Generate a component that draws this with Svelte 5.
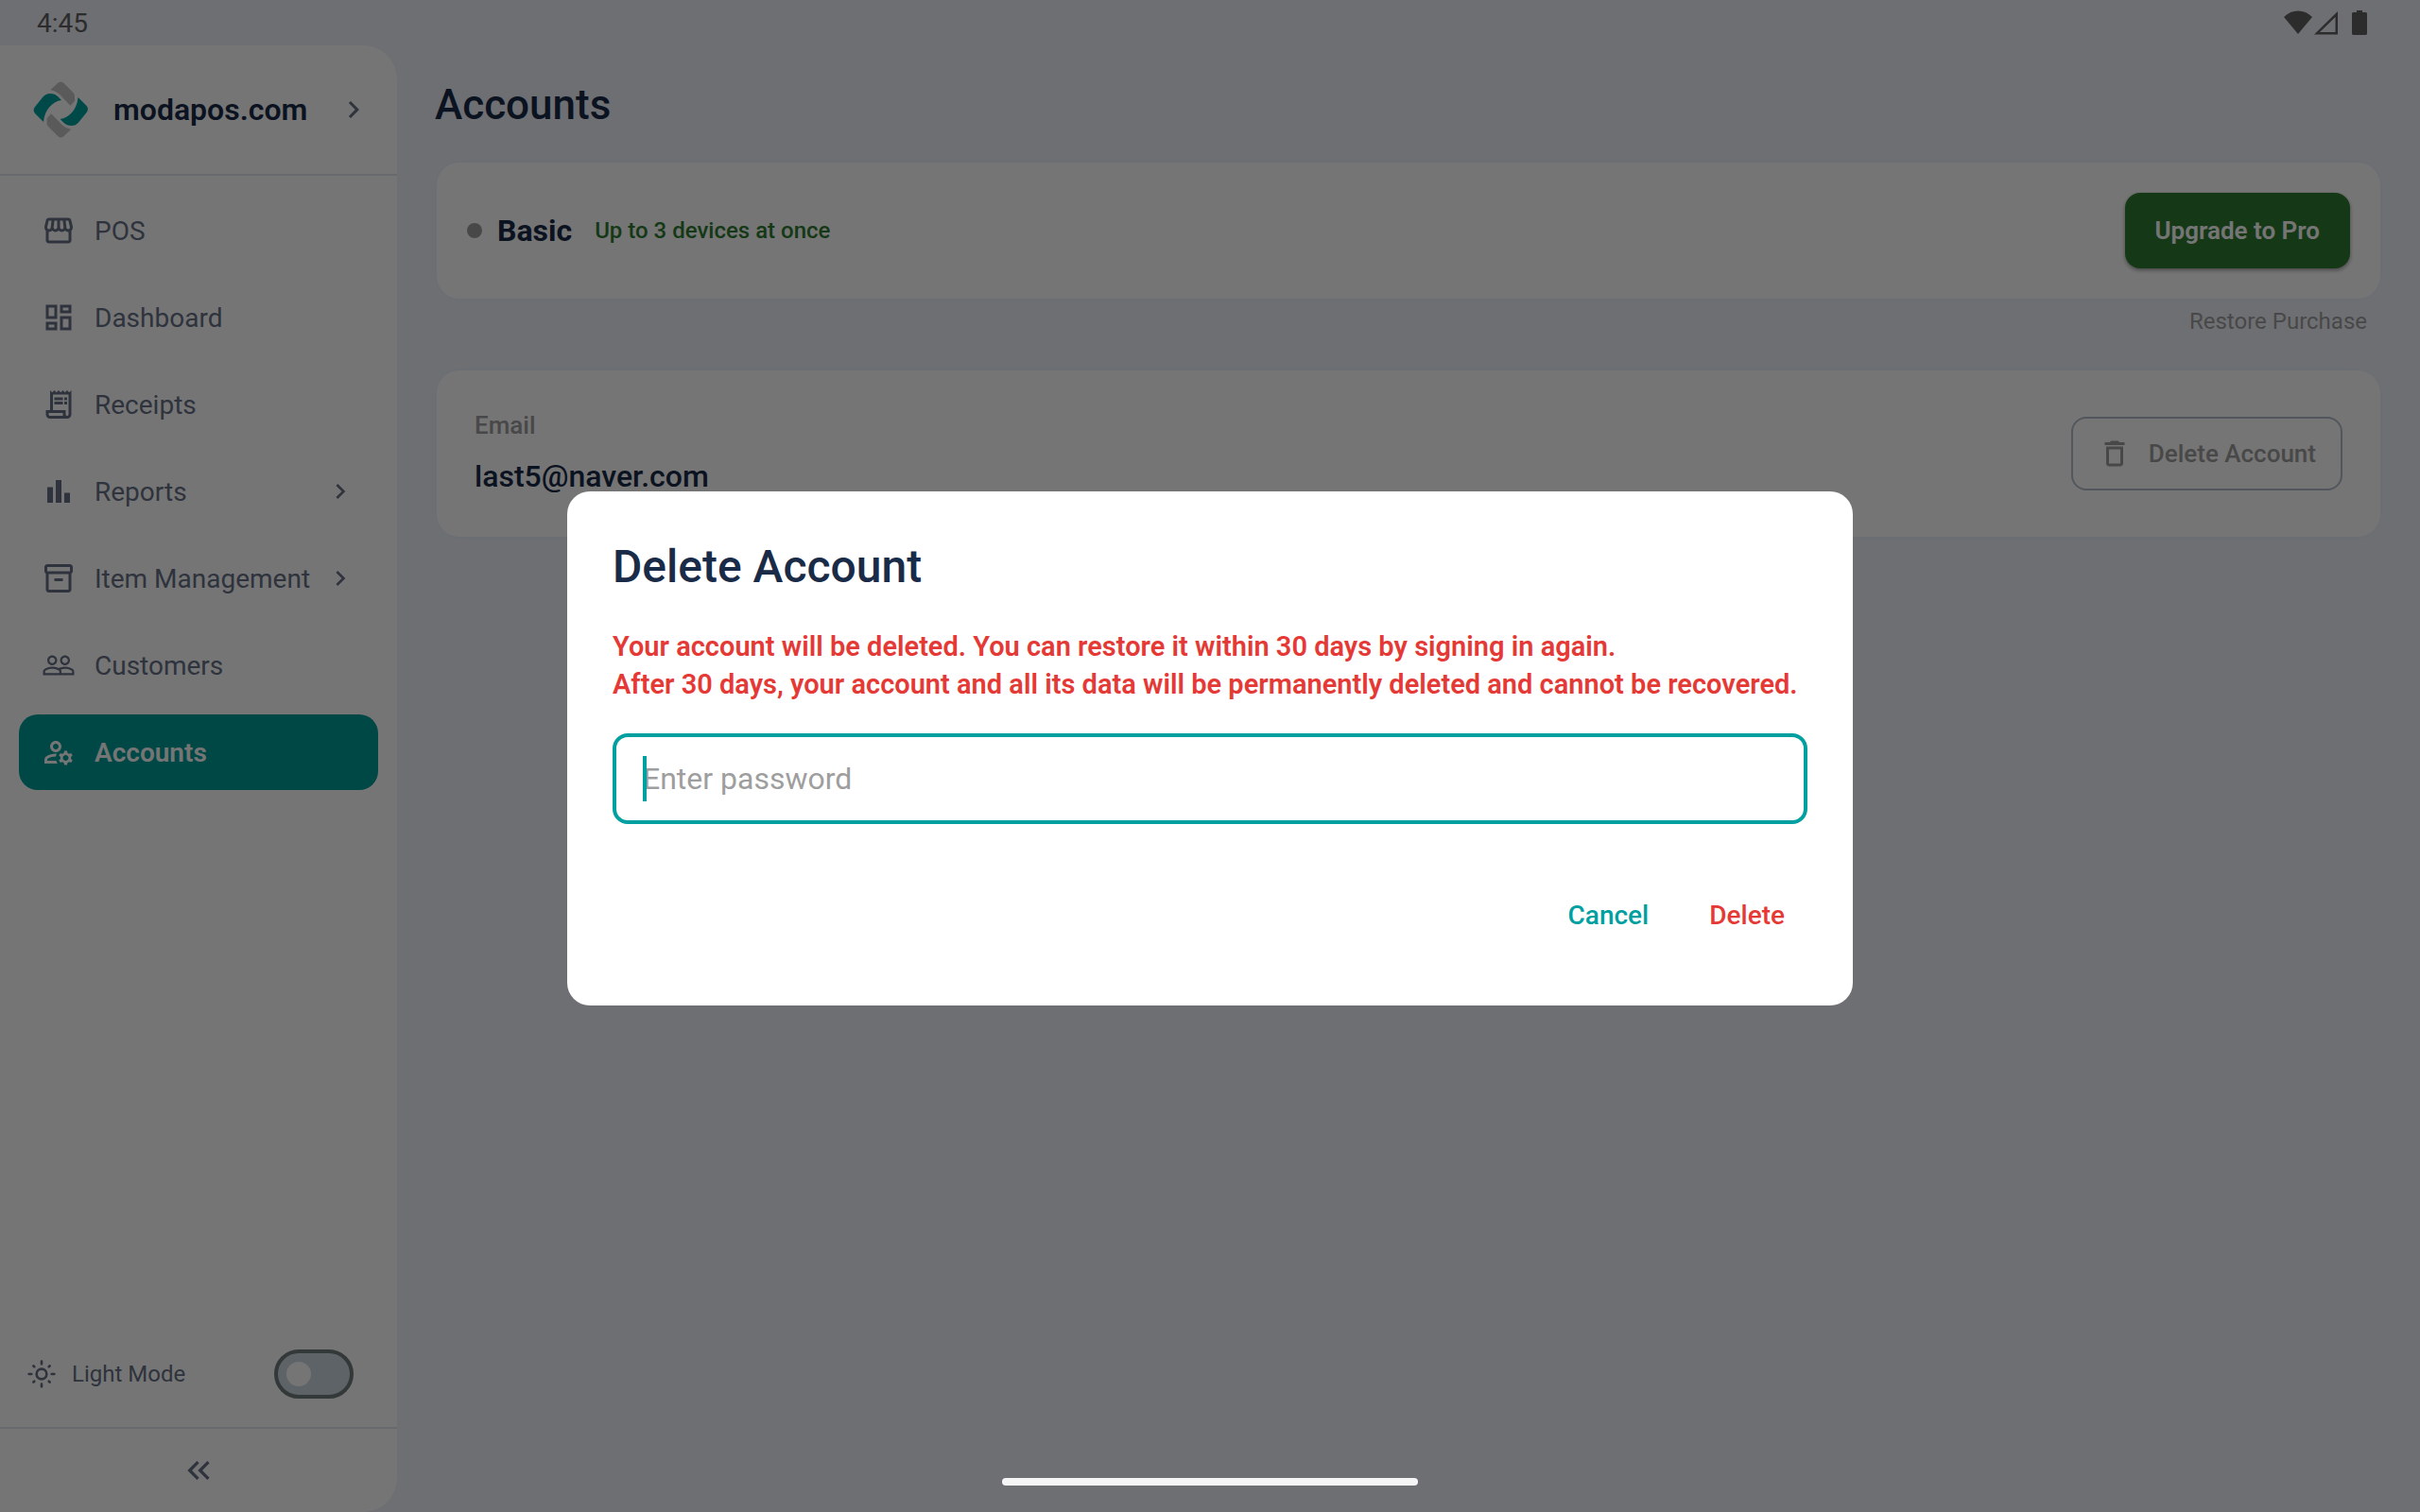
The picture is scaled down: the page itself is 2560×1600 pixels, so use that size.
<script lang="ts">
  type NavItem = { label: string; icon: string; expandable?: boolean; active?: boolean };

  const items: NavItem[] = [
    {
      label: 'POS',
      icon: 'M21.9 8.89l-1.05-4.37c-.22-.9-1-1.52-1.91-1.52H5.05c-.9 0-1.69.63-1.9 1.52L2.1 8.89c-.24 1.02-.02 2.06.62 2.88.08.11.19.19.28.29V19c0 1.1.9 2 2 2h14c1.1 0 2-.9 2-2v-6.94c.09-.09.2-.18.28-.28.64-.82.87-1.87.62-2.89zm-2.99-3.9l1.05 4.37c.1.42.01.84-.25 1.17-.14.18-.44.47-.94.47-.61 0-1.14-.49-1.21-1.14L16.98 5l1.93-.01zM13 5h1.96l.54 4.52c.05.39-.07.78-.33 1.07-.22.26-.54.41-.95.41-.67 0-1.22-.59-1.22-1.31V5zM8.49 9.52L9.04 5H11v4.69c0 .72-.55 1.31-1.29 1.31-.34 0-.65-.15-.89-.41-.25-.29-.37-.68-.33-1.07zm-4.45-.16L5.05 5h1.97l-.58 4.86c-.08.65-.6 1.14-1.21 1.14-.49 0-.8-.29-.93-.47-.27-.32-.36-.75-.26-1.17zM5 19v-6.03c.08.01.15.03.23.03.87 0 1.66-.36 2.24-.95.6.6 1.4.95 2.31.95.87 0 1.65-.36 2.23-.93.59.57 1.39.93 2.29.93.84 0 1.64-.35 2.24-.95.58.59 1.37.95 2.24.95.08 0 .15-.02.23-.03V19H5z'
    },
    {
      label: 'Dashboard',
      icon: 'M19 5v2h-4V5h4M9 5v6H5V5h4m10 8v6h-4v-6h4M9 17v2H5v-2h4M21 3h-8v6h8V3zM11 3H3v10h8V3zm10 8h-8v10h8V11zm-10 4H3v6h8v-6z'
    },
    {
      label: 'Receipts',
      icon: 'M19.5 3.5L18 2l-1.5 1.5L15 2l-1.5 1.5L12 2l-1.5 1.5L9 2 7.5 3.5 6 2v14H3v3c0 1.66 1.34 3 3 3h12c1.66 0 3-1.34 3-3V2l-1.5 1.5zM15 20H6c-.55 0-1-.45-1-1v-1h10v2zm4-1c0 .55-.45 1-1 1s-1-.45-1-1v-3H8V5h11v14zM9 7h6v2H9zM16 7h2v2h-2zM9 10h6v2H9zM16 10h2v2h-2z'
    },
    { label: 'Reports', icon: 'M4 9h4v11H4zM16 13h4v7h-4zM10 4h4v16h-4z', expandable: true },
    {
      label: 'Item Management',
      icon: 'M20 2H4c-1 0-2 .9-2 2v3.01c0 .72.43 1.34 1 1.69V20c0 1.1 1.1 2 2 2h14c.9 0 2-.9 2-2V8.7c.57-.35 1-.97 1-1.69V4c0-1.1-1-2-2-2zm-1 18H5V9h14v11zm1-13H4V4h16v3zM9 12h6v2H9z',
      expandable: true
    },
    {
      label: 'Customers',
      icon: 'M16.5 13c-1.2 0-3.07.34-4.5 1-1.43-.67-3.3-1-4.5-1C5.33 13 1 14.08 1 16.25V19h22v-2.75c0-2.17-4.33-3.25-6.5-3.25zm-4 4.5h-10v-1.25c0-.54 2.56-1.75 5-1.75s5 1.21 5 1.75v1.25zm9 0H14v-1.25c0-.46-.2-.86-.52-1.22.88-.3 1.96-.53 3.02-.53 2.44 0 5 1.21 5 1.75v1.25zM7.5 12c1.93 0 3.5-1.57 3.5-3.5S9.43 5 7.5 5 4 6.57 4 8.5 5.57 12 7.5 12zm0-5.5c1.1 0 2 .9 2 2s-.9 2-2 2-2-.9-2-2 .9-2 2-2zm9 5.5c1.93 0 3.5-1.57 3.5-3.5S18.43 5 16.5 5 13 6.57 13 8.5s1.57 3.5 3.5 3.5zm0-5.5c1.1 0 2 .9 2 2s-.9 2-2 2-2-.9-2-2 .9-2 2-2z'
    },
    {
      label: 'Accounts',
      icon: 'M4 18v-.65c0-.34.16-.66.41-.81C6.1 15.53 8.03 15 10 15c.03 0 .05 0 .08.01.1-.7.3-1.37.59-1.98-.22-.02-.44-.03-.67-.03-2.42 0-4.68.67-6.61 1.82-.88.52-1.39 1.5-1.39 2.53V20h9.26c-.42-.6-.75-1.28-.97-2H4zM10 12c2.21 0 4-1.79 4-4s-1.79-4-4-4-4 1.79-4 4 1.79 4 4 4zm0-6c1.1 0 2 .9 2 2s-.9 2-2 2-2-.9-2-2 .9-2 2-2zM20.75 16c0-.22-.03-.42-.06-.63l1.14-1.01-1-1.73-1.45.49c-.32-.27-.68-.48-1.08-.63L18 11h-2l-.3 1.49c-.4.15-.76.36-1.08.63l-1.45-.49-1 1.73 1.14 1.01c-.03.21-.06.41-.06.63s.03.42.06.63l-1.14 1.01 1 1.73 1.45-.49c.32.27.68.48 1.08.63L16 21h2l.3-1.49c.4-.15.76-.36 1.08-.63l1.45.49 1-1.73-1.14-1.01c.03-.21.06-.41.06-.63zM17 18c-1.1 0-2-.9-2-2s.9-2 2-2 2 .9 2 2-.9 2-2 2z',
      active: true
    }
  ];

  const chevron = 'M8.59 16.59 13.17 12 8.59 7.41 10 6l6 6-6 6z';

  let password = $state('');
  let lightMode = $state(false);
</script>

{#snippet logoHalf()}
  <path class="logo-gray" d="M21.300 11.300 29 4Q32.300 1 35.500 4L45.500 14Q47 15.500 47 17.500V22.700L42.500 27.700 33.500 18.500Q28 12 21.300 11.300z" />
  <path class="logo-teal" d="M33 22Q26 23 20.500 29Q15 35 14 45L5 36Q2.300 32.500 5 29L13.500 18.500Q16.500 15 21 15Q26 15 29 18z" />
{/snippet}

<div class="app">
  <header class="status-bar">
    <span>4:45</span>
    <div class="status-icons">
      <svg width="32" height="28" viewBox="0 0 32 28">
        <path d="M0 8C8.500-.6 21.500-.6 30 8L15 26z" />
      </svg>
      <svg width="26" height="28" viewBox="0 0 26 28">
        <path d="M0 26.500 25 2v24.500zM6 24h16.500V8z" fill-rule="evenodd" />
      </svg>
      <svg class="battery" width="16" height="28" viewBox="0 0 16 28">
        <path d="M5 1h6v2h3.500c.8 0 1.500.7 1.500 1.500v21c0 .8-.7 1.500-1.500 1.500h-13C.7 27 0 26.300 0 25.500v-21C0 3.700.7 3 1.500 3H5z" />
      </svg>
    </div>
  </header>

  <div class="layout">
    <aside class="sidebar">
      <button class="brand" type="button">
        <svg class="logo" viewBox="0 0 64 64">
          {@render logoHalf()}
          <g transform="rotate(180 32.300 32)">{@render logoHalf()}</g>
        </svg>
        <span>modapos.com</span>
        <svg class="icon" viewBox="0 0 24 24"><path d={chevron} /></svg>
      </button>

      <nav>
        {#each items as item (item.label)}
          <a class="nav-item" class:active={item.active} href="#{item.label.toLowerCase().replace(' ', '-')}">
            <svg class="icon" viewBox="0 0 24 24"><path d={item.icon} /></svg>
            <span>{item.label}</span>
            {#if item.expandable}
              <svg class="expand" viewBox="0 0 24 24"><path d={chevron} /></svg>
            {/if}
          </a>
        {/each}
      </nav>

      <label class="mode">
        <svg class="sun" viewBox="0 0 24 24">
          <circle cx="12" cy="12" r="4" />
          <path d="M12 2v2M12 20v2M2 12h2M20 12h2M5.500 5.500l.7.7M17.800 17.800l.7.7M5.500 18.500l.7-.7M17.800 6.200l.7-.7" />
        </svg>
        <span>Light Mode</span>
        <input type="checkbox" role="switch" bind:checked={lightMode} />
      </label>

      <button class="collapse" type="button" aria-label="Collapse menu">
        <svg viewBox="0 0 24 24">
          <path d="M17.590 18 19 16.590 14.420 12 19 7.410 17.590 6l-6 6zM11 18l1.410-1.410L7.830 12l4.580-4.590L11 6l-6 6z" />
        </svg>
      </button>
    </aside>

    <main>
      <h1>Accounts</h1>

      <section class="card plan">
        <span class="dot"></span>
        <strong>Basic</strong>
        <span class="limit">Up to 3 devices at once</span>
        <button class="upgrade" type="button">Upgrade to Pro</button>
      </section>
      <button class="restore" type="button">Restore Purchase</button>

      <section class="card account">
        <dl>
          <dt>Email</dt>
          <dd>last5@naver.com</dd>
        </dl>
        <button class="delete-account" type="button">
          <svg class="icon" viewBox="0 0 24 24">
            <path d="M6 19c0 1.100.9 2 2 2h8c1.100 0 2-.9 2-2V7H6v12zM8 9h8v10H8V9zm7.500-5-1-1h-5l-1 1H5v2h14V4z" />
          </svg>
          Delete Account
        </button>
      </section>
    </main>
  </div>
</div>

<div class="scrim">
  <div class="dialog" role="dialog" aria-modal="true" aria-labelledby="dialog-title">
    <h2 id="dialog-title">Delete Account</h2>
    <p>
      Your account will be deleted. You can restore it within 30 days by signing in again.<br />
      After 30 days, your account and all its data will be permanently deleted and cannot be recovered.
    </p>
    <div class="field">
      <input type="password" placeholder="Enter password" aria-label="Enter password" bind:value={password} />
      {#if !password}
        <span class="caret"></span>
      {/if}
    </div>
    <div class="actions">
      <button class="cancel" type="button">Cancel</button>
      <button class="confirm" type="button">Delete</button>
    </div>
  </div>
  <div class="home-bar"></div>
</div>

<style>
  :global(body) {
    margin: 0;
    font-family: Roboto, 'Liberation Sans', sans-serif;
    font-size: 28px;
    color: #1a2b48;
    background: #f0f2fa;
  }

  button {
    font: inherit;
    color: inherit;
    background: none;
    border: 0;
    padding: 0;
    cursor: pointer;
  }

  svg {
    display: block;
    flex: none;
    fill: currentColor;
  }

  .app {
    display: flex;
    flex-direction: column;
    min-height: 100vh;
  }

  .status-bar {
    display: flex;
    align-items: center;
    justify-content: space-between;
    height: 48px;
    padding: 0 56px 0 39px;
    color: #616161;
  }

  .status-icons {
    display: flex;
    align-items: center;
  }

  .battery {
    margin-left: 14px;
  }

  .layout {
    display: flex;
    flex: 1;
  }

  .sidebar {
    display: flex;
    flex: none;
    flex-direction: column;
    width: 420px;
    border-radius: 0 36px 36px 0;
    background: #fff;
    color: #667085;
  }

  .icon {
    width: 36px;
    height: 36px;
  }

  .brand {
    display: flex;
    align-items: center;
    gap: 24px;
    height: 138px;
    box-sizing: border-box;
    padding: 0 28px 0 32px;
    border-bottom: 2px solid #e2e4ee;
    font-size: 32px;
    font-weight: 600;
    text-align: left;
  }

  .brand span {
    flex: 1;
    color: #1a2b48;
  }

  .logo {
    width: 64px;
    height: 64px;
  }

  .logo-gray {
    fill: #c4c4c4;
  }

  .logo-teal {
    fill: #00a0a0;
  }

  nav {
    display: flex;
    flex: 1;
    flex-direction: column;
    gap: 12px;
    padding: 18px 20px;
  }

  .nav-item {
    display: flex;
    align-items: center;
    height: 80px;
    padding: 0 24px;
    border-radius: 20px;
    color: inherit;
    text-decoration: none;
    white-space: nowrap;
  }

  .nav-item span {
    margin-left: 20px;
  }

  .nav-item.active {
    background: #009d98;
    color: #fff;
    font-weight: 600;
  }

  .expand {
    width: 32px;
    height: 32px;
    margin-left: auto;
  }

  .mode {
    display: flex;
    align-items: center;
    gap: 16px;
    padding: 28px 46px 30px 28px;
    font-size: 24px;
  }

  .sun {
    width: 32px;
    height: 32px;
    fill: none;
    stroke: currentColor;
    stroke-width: 2;
    stroke-linecap: round;
  }

  .mode input {
    display: flex;
    align-items: center;
    appearance: none;
    width: 84px;
    height: 52px;
    margin: 0 0 0 auto;
    padding: 0 9px;
    box-sizing: border-box;
    border: 4px solid #707c7b;
    border-radius: 26px;
    background: #cbd8df;
  }

  .mode input::before {
    content: '';
    width: 26px;
    height: 26px;
    border-radius: 50%;
    background: #fff;
  }

  .mode input:checked {
    justify-content: flex-end;
  }

  .collapse {
    display: grid;
    place-items: center;
    height: 90px;
    border-top: 2px solid #e2e4ee;
  }

  .collapse svg {
    width: 40px;
    height: 40px;
  }

  main {
    display: flex;
    flex: 1;
    flex-direction: column;
    padding: 32px 40px;
  }

  h1 {
    margin: 0 0 28px;
    font-size: 44px;
    font-weight: 500;
    line-height: 62px;
  }

  .card {
    display: flex;
    align-items: center;
    border: 2px solid #eaf0fb;
    border-radius: 26px;
    background: #fff;
  }

  .plan {
    padding: 32px;
  }

  .dot {
    width: 16px;
    height: 16px;
    border-radius: 50%;
    background: #9e9e9e;
  }

  .plan strong {
    margin: 0 24px 0 16px;
    font-size: 32px;
    font-weight: 700;
  }

  .limit {
    color: #2e7d32;
    font-size: 24px;
    font-weight: 500;
  }

  .upgrade {
    height: 80px;
    margin-left: auto;
    padding: 0 32px;
    border-radius: 16px;
    background: #2e7d32;
    box-shadow: 0 2px 4px rgb(0 0 0 / 40%);
    color: #fff;
    font-size: 26px;
    font-weight: 600;
  }

  .restore {
    align-self: flex-end;
    margin: 0 16px 28px 0;
    font-size: 24px;
    line-height: 44px;
    color: #9e9e9e;
  }

  .account {
    justify-content: space-between;
    padding: 36px 40px;
  }

  dl {
    margin: 0;
    padding-bottom: 4px;
  }

  dt {
    color: #9e9e9e;
    font-size: 26px;
    font-weight: 500;
    line-height: 44px;
  }

  dd {
    margin: 8px 0 0;
    font-size: 32px;
    font-weight: 500;
    line-height: 48px;
  }

  .delete-account {
    display: flex;
    align-items: center;
    gap: 18px;
    height: 78px;
    padding: 0 26px;
    border: 2px solid #b2bdcb;
    border-radius: 16px;
    color: #9e9e9e;
    font-size: 26px;
    font-weight: 500;
  }

  .scrim {
    position: fixed;
    inset: 0;
    display: grid;
    place-items: center;
    padding: 48px 0 64px;
    background: rgb(0 0 0 / 54%);
  }

  .dialog {
    width: min(1360px, 100% - 80px);
    box-sizing: border-box;
    padding: 48px;
    border-radius: 24px;
    background: #fff;
  }

  h2 {
    margin: 0 0 32px;
    font-size: 48px;
    font-weight: 500;
    line-height: 64px;
  }

  p {
    margin: 0 0 32px;
    color: #e53935;
    font-size: 29px;
    font-weight: 600;
    line-height: 40px;
  }

  .field {
    position: relative;
  }

  .field input {
    width: 100%;
    height: 96px;
    box-sizing: border-box;
    padding: 0 28px;
    border: 4px solid #00a0a0;
    border-radius: 16px;
    outline: none;
    font: inherit;
    font-size: 32px;
  }

  .field input::placeholder {
    color: #9e9e9e;
    opacity: 1;
  }

  .caret {
    position: absolute;
    top: 24px;
    left: 32px;
    width: 4px;
    height: 48px;
    background: #00a0a0;
  }

  .actions {
    display: flex;
    justify-content: flex-end;
    gap: 16px;
    margin-top: 48px;
  }

  .actions button {
    height: 96px;
    padding: 0 24px;
    font-weight: 500;
  }

  .cancel {
    color: #00a0a0;
  }

  .confirm {
    color: #e53935;
  }

  .home-bar {
    position: absolute;
    bottom: 28px;
    width: 440px;
    height: 8px;
    border-radius: 4px;
    background: #f5f5f5;
  }
</style>
